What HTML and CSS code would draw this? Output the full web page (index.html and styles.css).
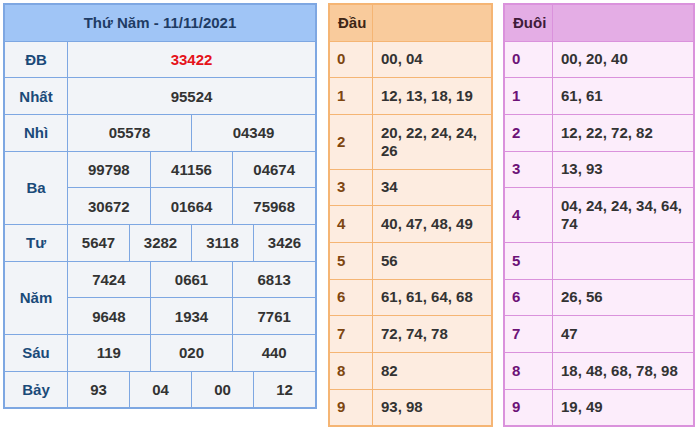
FILE: index.html
```html
<!DOCTYPE html>
<html lang="vi">
<head>
<meta charset="utf-8">
<title>Kết quả xổ số - Thứ Năm 11/11/2021</title>
<link rel="stylesheet" href="styles.css">
</head>
<body>
<div class="page">
  <div class="kq">
    <div class="kq-head">Thứ Năm - 11/11/2021</div>

    <div class="lbl">ĐB</div>
    <div class="num c12 red">33422</div>

    <div class="lbl">Nhất</div>
    <div class="num c12">95524</div>

    <div class="lbl">Nhì</div>
    <div class="num c6">05578</div>
    <div class="num c6">04349</div>

    <div class="lbl r2">Ba</div>
    <div class="num c4">99798</div>
    <div class="num c4">41156</div>
    <div class="num c4">04674</div>
    <div class="num c4">30672</div>
    <div class="num c4">01664</div>
    <div class="num c4">75968</div>

    <div class="lbl">Tư</div>
    <div class="num c3">5647</div>
    <div class="num c3">3282</div>
    <div class="num c3">3118</div>
    <div class="num c3">3426</div>

    <div class="lbl r2">Năm</div>
    <div class="num c4">7424</div>
    <div class="num c4">0661</div>
    <div class="num c4">6813</div>
    <div class="num c4">9648</div>
    <div class="num c4">1934</div>
    <div class="num c4">7761</div>

    <div class="lbl">Sáu</div>
    <div class="num c4">119</div>
    <div class="num c4">020</div>
    <div class="num c4">440</div>

    <div class="lbl">Bảy</div>
    <div class="num c3">93</div>
    <div class="num c3">04</div>
    <div class="num c3">00</div>
    <div class="num c3">12</div>
  </div>

  <div class="lt lt-dau">
    <div class="lt-h">Đầu</div><div class="lt-h"></div>
    <div class="lt-k">0</div><div class="lt-v">00, 04</div>
    <div class="lt-k">1</div><div class="lt-v">12, 13, 18, 19</div>
    <div class="lt-k">2</div><div class="lt-v">20, 22, 24, 24, 26</div>
    <div class="lt-k">3</div><div class="lt-v">34</div>
    <div class="lt-k">4</div><div class="lt-v">40, 47, 48, 49</div>
    <div class="lt-k">5</div><div class="lt-v">56</div>
    <div class="lt-k">6</div><div class="lt-v">61, 61, 64, 68</div>
    <div class="lt-k">7</div><div class="lt-v">72, 74, 78</div>
    <div class="lt-k">8</div><div class="lt-v">82</div>
    <div class="lt-k">9</div><div class="lt-v">93, 98</div>
  </div>

  <div class="lt lt-duoi">
    <div class="lt-h">Đuôi</div><div class="lt-h"></div>
    <div class="lt-k">0</div><div class="lt-v">00, 20, 40</div>
    <div class="lt-k">1</div><div class="lt-v">61, 61</div>
    <div class="lt-k">2</div><div class="lt-v">12, 22, 72, 82</div>
    <div class="lt-k">3</div><div class="lt-v">13, 93</div>
    <div class="lt-k">4</div><div class="lt-v">04, 24, 24, 34, 64, 74</div>
    <div class="lt-k">5</div><div class="lt-v"></div>
    <div class="lt-k">6</div><div class="lt-v">26, 56</div>
    <div class="lt-k">7</div><div class="lt-v">47</div>
    <div class="lt-k">8</div><div class="lt-v">18, 48, 68, 78, 98</div>
    <div class="lt-k">9</div><div class="lt-v">19, 49</div>
  </div>
</div>
</body>
</html>
```

FILE: styles.css
```css
* { box-sizing: border-box; }

body {
  margin: 0;
  background: #ffffff;
  font-family: "Liberation Sans", Arial, sans-serif;
  font-weight: bold;
  font-size: 15px;
}

.page {
  display: flex;
  align-items: flex-start;
  padding: 3px 0 0 3px;
}

/* ---------- results table ---------- */
.kq {
  width: 314px;
  display: grid;
  grid-template-columns: 62px repeat(12, 1fr);
  grid-auto-rows: 35.67px;
  gap: 1px;
  background: #7ea7e2;
  border: 2px solid #7ea7e2;
}

.kq > div {
  display: flex;
  align-items: center;
  justify-content: center;
  background: #f2f4f8;
}

.kq .kq-head {
  grid-column: 1 / -1;
  background: #a0c5f6;
  color: #1f3c64;
}

.kq .lbl { color: #1b4a79; }

.kq .num { color: #333333; }

.kq .red { color: #e5121a; }

.c12 { grid-column: span 12; }
.c6 { grid-column: span 6; }
.c4 { grid-column: span 4; }
.c3 { grid-column: span 3; }
.r2 { grid-row: span 2; }

/* ---------- loto tables ---------- */
.lt {
  display: grid;
  gap: 1px;
  border: 2px solid;
  line-height: 18px;
}

.lt > div {
  display: flex;
  align-items: center;
  padding: 8.83px 4px 8.83px 8px;
  min-height: 35.67px;
}

.lt .lt-k { padding-left: 7px; }

.lt .lt-v { color: #333333; }

.lt-dau {
  width: 165px;
  margin-left: 11px;
  grid-template-columns: 42px 1fr;
  background: #f5b574;
  border-color: #f5b574;
}
.lt-dau > div { background: #fdece0; }
.lt-dau .lt-h { background: #f9cb9c; color: #3e2616; }
.lt-dau .lt-k { color: #7e4610; }

.lt-duoi {
  width: 192px;
  margin-left: 10px;
  grid-template-columns: 47px 1fr;
  background: #da92dc;
  border-color: #da92dc;
}
.lt-duoi > div { background: #fcedfb; }
.lt-duoi .lt-h { background: #e4ade5; color: #3f1b3a; }
.lt-duoi .lt-k { color: #6c1277; }
```
